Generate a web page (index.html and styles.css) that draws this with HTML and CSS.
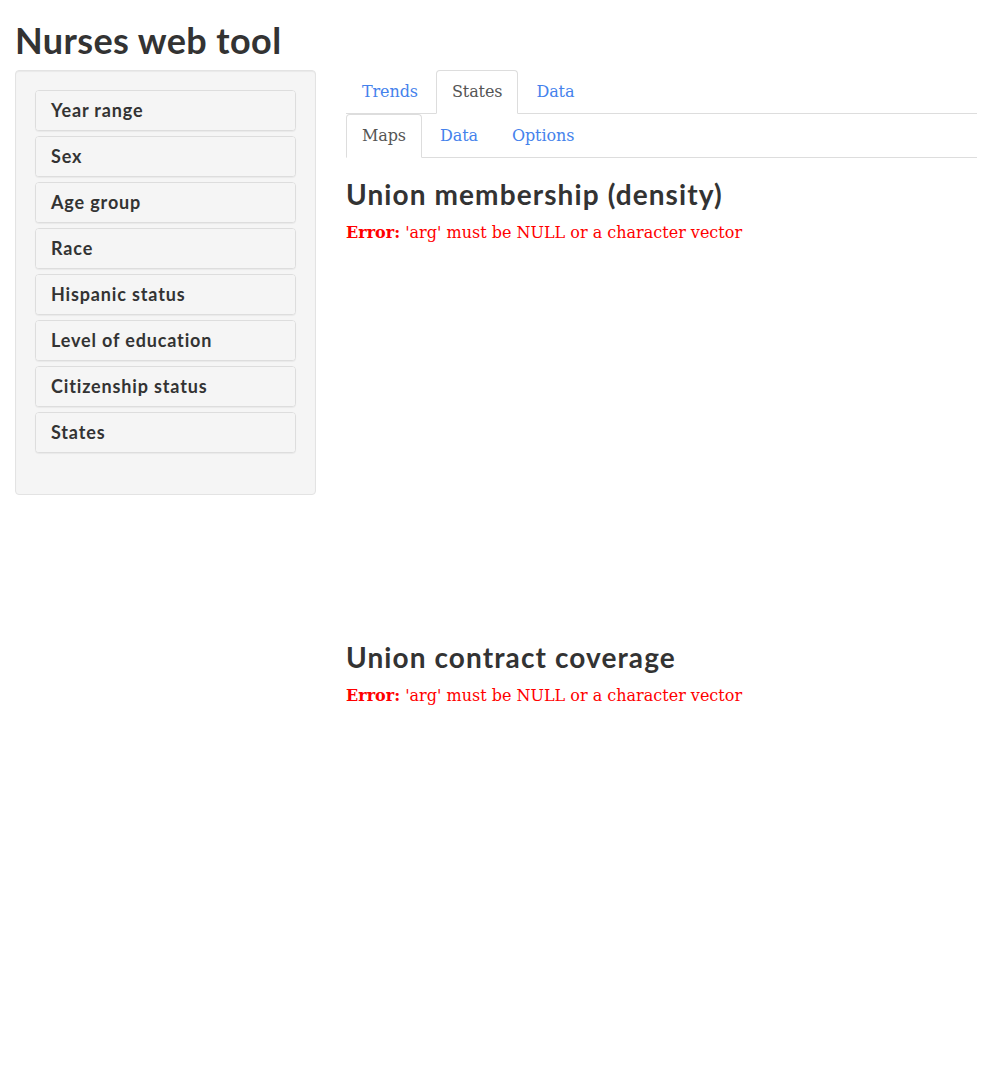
FILE: index.html
```html
<!DOCTYPE html>
<html>

<head>
    <title>Nurses web tool</title>
    <link rel="stylesheet" href="styles.css">
</head>

<body>
    <div class="container">
        <h2 class="titulo">Nurses web tool</h2>
        <div class="linha">
            <div class="lateral">
                <div class="well">
                    <div class="panel"><div class="panel-heading">Year range</div></div>
                    <div class="panel"><div class="panel-heading">Sex</div></div>
                    <div class="panel"><div class="panel-heading">Age group</div></div>
                    <div class="panel"><div class="panel-heading">Race</div></div>
                    <div class="panel"><div class="panel-heading">Hispanic status</div></div>
                    <div class="panel"><div class="panel-heading">Level of education</div></div>
                    <div class="panel"><div class="panel-heading">Citizenship status</div></div>
                    <div class="panel"><div class="panel-heading">States</div></div>
                </div>
            </div>
            <div class="principal">
                <ul class="nav-tabs">
                    <li><a href="#">Trends</a></li>
                    <li class="active"><a href="#">States</a></li>
                    <li><a href="#">Data</a></li>
                </ul>
                <ul class="nav-tabs">
                    <li class="active"><a href="#">Maps</a></li>
                    <li><a href="#">Data</a></li>
                    <li><a href="#">Options</a></li>
                </ul>
                <h3>Union membership (density)</h3>
                <div class="grafico"><span class="erro-rotulo">Error:</span> 'arg' must be NULL or a character vector</div>
                <h3>Union contract coverage</h3>
                <div class="grafico"><span class="erro-rotulo">Error:</span> 'arg' must be NULL or a character vector</div>
            </div>
        </div>
    </div>
</body>

</html>
```

FILE: styles.css
```css
body {
    margin: 0;
    font-family: "DejaVu Serif", serif;
    font-size: 16px;
    line-height: 22px;
    color: #333;
    background-color: #fff;
}

.container {
    padding: 0 15px;
}

.titulo {
    font-family: Lato, sans-serif;
    font-weight: 700;
    font-size: 36px;
    line-height: 40px;
    letter-spacing: 0.4px;
    margin: 20px 0 10px 0;
    color: #333;
}

.linha {
    display: flex;
    gap: 30px;
}

.lateral {
    width: 301px;
    flex: none;
}

.principal {
    flex: 1;
}

.well {
    background-color: #f5f5f5;
    border: 1px solid #e3e3e3;
    border-radius: 4px;
    padding: 19px 19px 41px 19px;
    box-shadow: inset 0 1px 1px rgba(0, 0, 0, 0.05);
}

.panel {
    border: 1px solid #ddd;
    border-radius: 4px;
    margin-bottom: 5px;
    background-color: #fff;
    box-shadow: 0 1px 1px rgba(0, 0, 0, 0.05);
}

.panel:last-child {
    margin-bottom: 0;
}

.panel-heading {
    background-color: #f5f5f5;
    border-radius: 3px;
    padding: 10px 15px;
    font-family: Lato, sans-serif;
    font-weight: 700;
    font-size: 18px;
    line-height: 19px;
    letter-spacing: 0.85px;
}

.nav-tabs {
    display: flex;
    list-style: none;
    margin: 0;
    padding: 0;
    border-bottom: 1px solid #ddd;
}

.nav-tabs li {
    margin-bottom: -1px;
}

.nav-tabs a {
    display: block;
    margin-right: 2px;
    padding: 10px 15px;
    border: 1px solid transparent;
    border-radius: 4px 4px 0 0;
    color: #4582ec;
    text-decoration: none;
    letter-spacing: -0.1px;
}

.nav-tabs .active a {
    color: #555;
    background-color: #fff;
    border-color: #ddd #ddd transparent #ddd;
}

h3 {
    font-family: Lato, sans-serif;
    font-weight: 700;
    font-size: 28px;
    line-height: 32px;
    letter-spacing: 1.1px;
    margin: 20px 0 12px 0;
    color: #333;
}

.grafico {
    height: 399px;
    color: red;
}

.erro-rotulo {
    font-weight: 700;
}
```
